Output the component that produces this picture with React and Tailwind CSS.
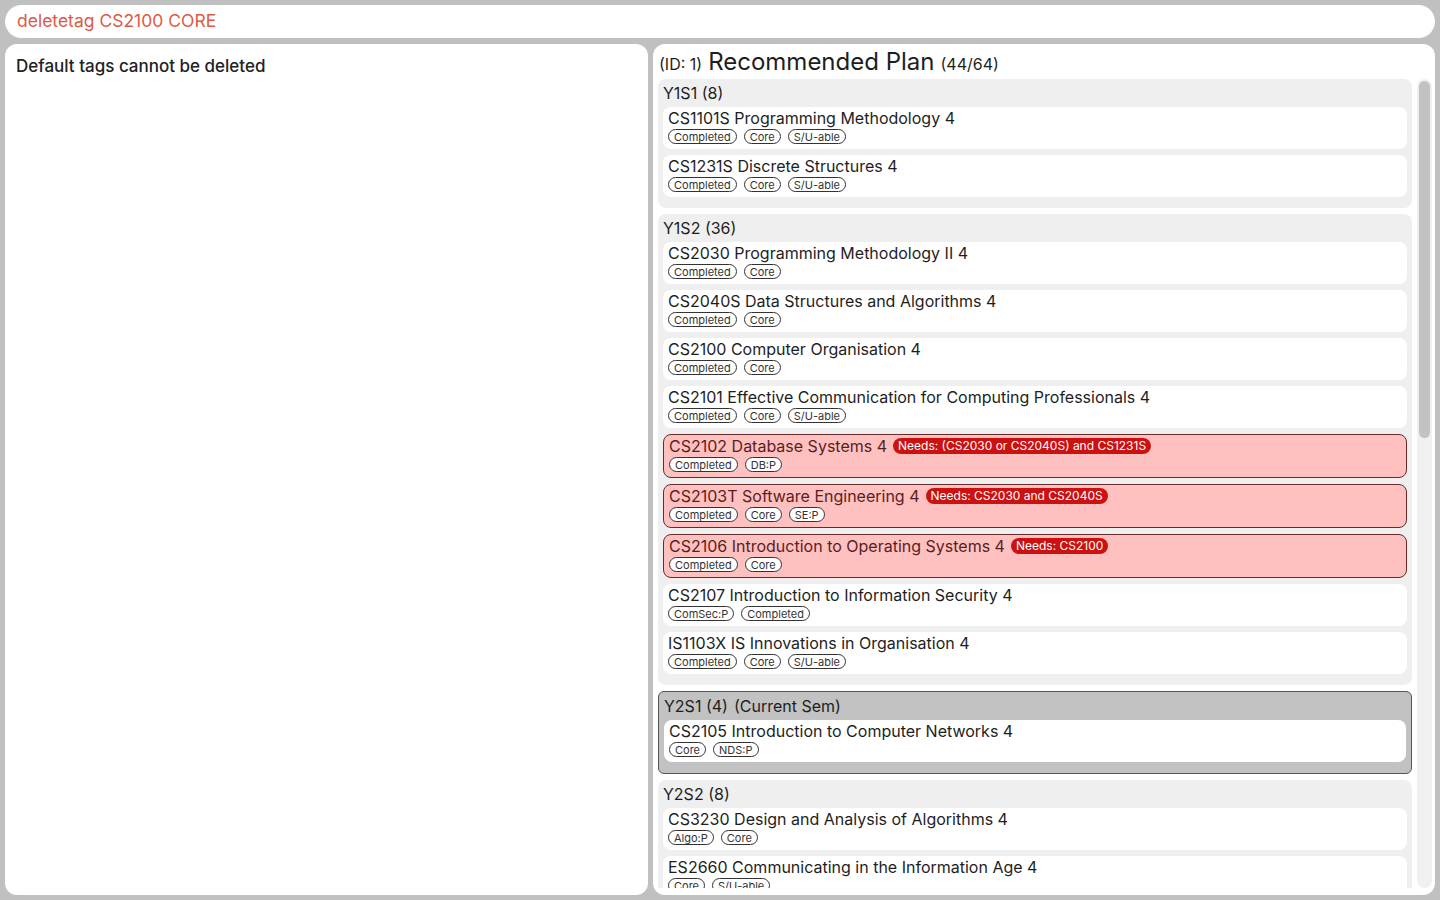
import React from "react";

const semesters = [
  {
    name: "Y1S1",
    mc: 8,
    mods: [
      { code: "CS1101S", title: "Programming Methodology", mc: 4, tags: ["Completed", "Core", "S/U-able"] },
      { code: "CS1231S", title: "Discrete Structures", mc: 4, tags: ["Completed", "Core", "S/U-able"] },
    ],
  },
  {
    name: "Y1S2",
    mc: 36,
    mods: [
      { code: "CS2030", title: "Programming Methodology II", mc: 4, tags: ["Completed", "Core"] },
      { code: "CS2040S", title: "Data Structures and Algorithms", mc: 4, tags: ["Completed", "Core"] },
      { code: "CS2100", title: "Computer Organisation", mc: 4, tags: ["Completed", "Core"] },
      { code: "CS2101", title: "Effective Communication for Computing Professionals", mc: 4, tags: ["Completed", "Core", "S/U-able"] },
      { code: "CS2102", title: "Database Systems", mc: 4, tags: ["Completed", "DB:P"], needs: "Needs: (CS2030 or CS2040S) and CS1231S" },
      { code: "CS2103T", title: "Software Engineering", mc: 4, tags: ["Completed", "Core", "SE:P"], needs: "Needs: CS2030 and CS2040S" },
      { code: "CS2106", title: "Introduction to Operating Systems", mc: 4, tags: ["Completed", "Core"], needs: "Needs: CS2100" },
      { code: "CS2107", title: "Introduction to Information Security", mc: 4, tags: ["ComSec:P", "Completed"] },
      { code: "IS1103X", title: "IS Innovations in Organisation", mc: 4, tags: ["Completed", "Core", "S/U-able"] },
    ],
  },
  {
    name: "Y2S1",
    mc: 4,
    current: true,
    mods: [
      { code: "CS2105", title: "Introduction to Computer Networks", mc: 4, tags: ["Core", "NDS:P"] },
    ],
  },
  {
    name: "Y2S2",
    mc: 8,
    mods: [
      { code: "CS3230", title: "Design and Analysis of Algorithms", mc: 4, tags: ["Algo:P", "Core"] },
      { code: "ES2660", title: "Communicating in the Information Age", mc: 4, tags: ["Core", "S/U-able"] },
    ],
  },
];

function Tag({ label }) {
  return (
    <span className="h-[15px] px-[5px] pt-[1px] rounded-full border border-[#333] bg-white text-[11px] leading-none text-[#333] flex items-center">
      {label}
    </span>
  );
}

function ModuleCard({ mod }) {
  const bad = !!mod.needs;
  return (
    <div
      className={
        bad
          ? "rounded-[8px] border border-[#6a2a2a] bg-[#ffc0c0] px-[5px] pt-[1px] pb-[5px] text-[#5a1e1e]"
          : "rounded-[8px] bg-white px-[5px] pt-[1px] pb-[5px] text-[#1e1e1e]"
      }
    >
      <div className="flex items-center gap-[6px] h-[20px] text-[16px]">
        <span>
          {mod.code} {mod.title} {mod.mc}
        </span>
        {bad && (
          <span className="h-[16px] px-[5px] rounded-full bg-[#cc1111] text-white text-[12px] leading-[16px]">
            {mod.needs}
          </span>
        )}
      </div>
      <div className="flex gap-[7px] mt-[1px]">
        {mod.tags.map((t) => (
          <Tag key={t} label={t} />
        ))}
      </div>
    </div>
  );
}

function Semester({ sem }) {
  return (
    <div
      className={
        sem.current
          ? "rounded-[6px] border border-[#555] bg-[#c2c2c2] px-[5px] pb-[11px]"
          : "rounded-[8px] bg-[#efefef] px-[5px] pb-[11px]"
      }
    >
      <div className="h-[28px] flex items-center text-[16px] text-[#1e1e1e]">
        {sem.name} ({sem.mc}){sem.current && <span className="ml-[6px]">(Current Sem)</span>}
      </div>
      <div className="flex flex-col gap-[6px]">
        {sem.mods.map((m) => (
          <ModuleCard key={m.code} mod={m} />
        ))}
      </div>
    </div>
  );
}

export default function App() {
  return (
    <div
      className="h-screen w-full bg-[#c0c0c0] p-[5px] flex flex-col gap-[6px] overflow-hidden"
      style={{ fontFamily: "Inter, 'Noto Sans', sans-serif" }}
    >
      <div className="h-[33px] shrink-0 rounded-full bg-white flex items-center pl-[12px] text-[17.5px] text-[#dd5a44]">
        deletetag CS2100 CORE
      </div>
      <div className="flex-1 min-h-0 flex gap-[5px]">
        <div className="w-[643px] shrink-0 rounded-[12px] bg-white px-[11px] pt-[10px]">
          <div className="text-[17px] font-medium text-[#222]">Default tags cannot be deleted</div>
        </div>
        <div className="flex-1 min-w-0 rounded-[12px] bg-white pl-[5px] pr-[3px] pb-[7px] flex flex-col">
          <div className="h-[35px] shrink-0 flex items-baseline gap-[6px] pl-[1px] text-[#1e1e1e]">
            <span className="text-[16px]">(ID: 1)</span>
            <span className="text-[24px]">Recommended Plan</span>
            <span className="text-[16px]">(44/64)</span>
          </div>
          <div className="flex-1 min-h-0 flex gap-[5px]">
            <div className="flex-1 min-w-0 overflow-hidden flex flex-col gap-[6px]">
              {semesters.map((s) => (
                <Semester key={s.name} sem={s} />
              ))}
            </div>
            <div className="w-[15px] shrink-0 rounded-full bg-[#f0f0f0] p-[2px]">
              <div className="h-[357px] rounded-full bg-[#c2c2c2]" />
            </div>
          </div>
        </div>
      </div>
    </div>
  );
}
